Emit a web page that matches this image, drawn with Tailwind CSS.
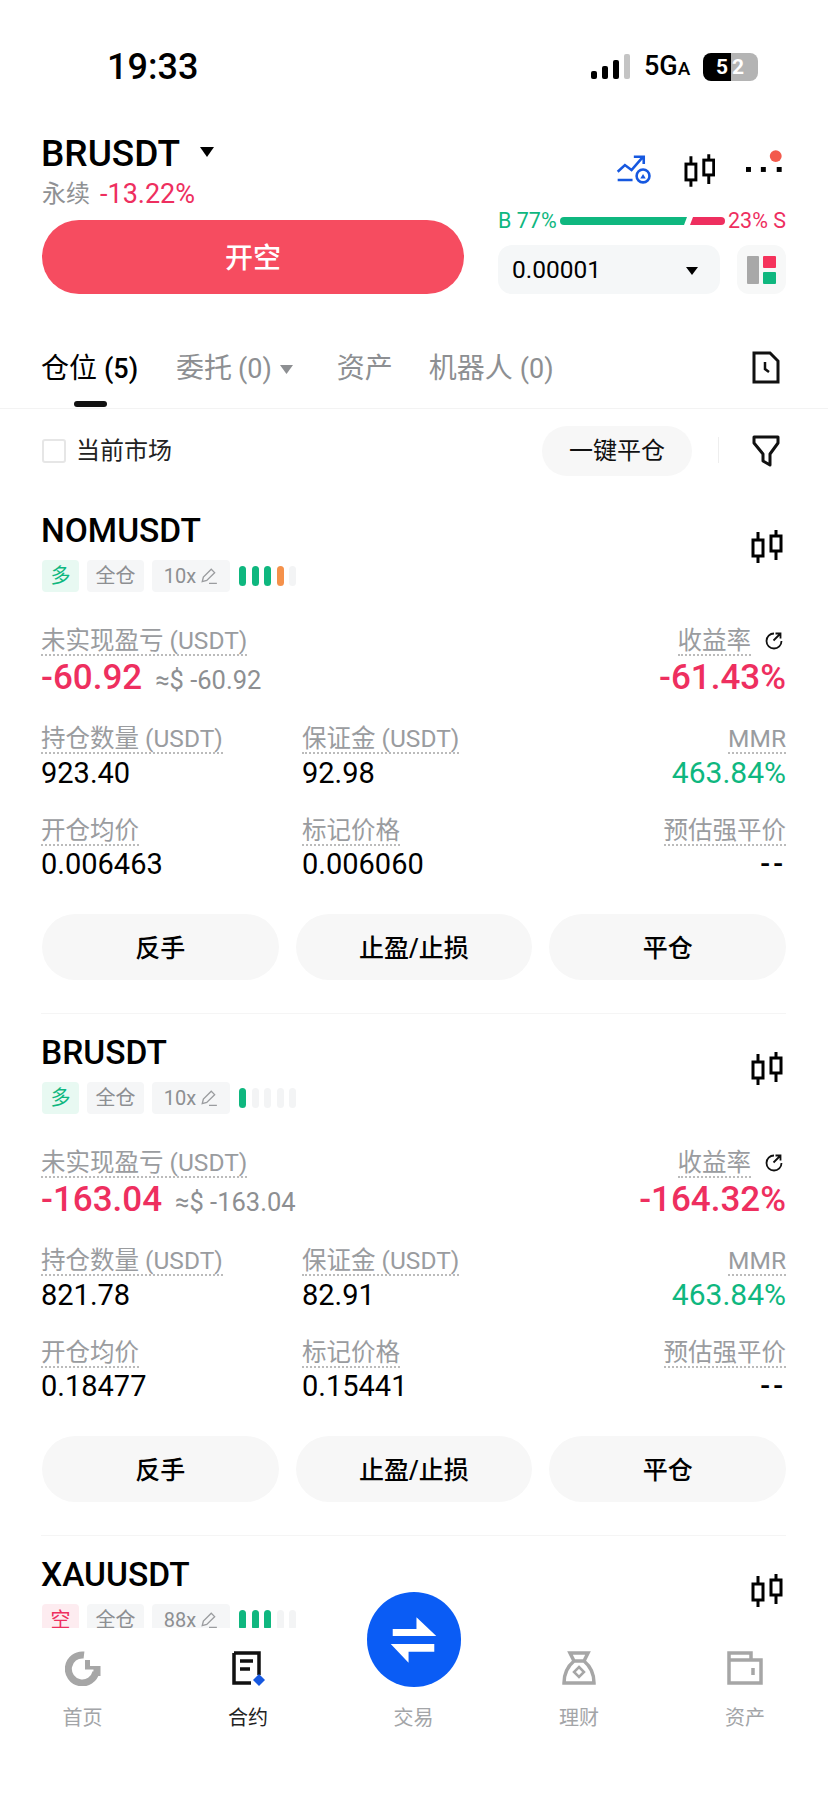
<!DOCTYPE html>
<html lang="zh-CN">
<head>
    <meta charset="UTF-8">
    <meta name="viewport" content="width=device-width, initial-scale=1.0">
    <title>BRUSDT</title>
    <script src="https://cdn.jsdelivr.net/npm/@tailwindcss/browser@4"></script>
</head>
<body class="bg-white text-black">
<svg class="hidden">
    <symbol id="candle" viewBox="0 0 32 34">
        <g fill="none" stroke="#000" stroke-width="3">
            <rect x="2" y="10" width="10" height="16"/><rect x="20" y="6" width="10" height="15"/>
            <path d="M7 2v8M7 26v7M25 0v6M25 21v9"/>
        </g>
    </symbol>
    <symbol id="pen" viewBox="0 0 16 16">
        <path d="M2 13 L3 9 L10 2 L13 5 L6 12 Z M8 14.5 H15" fill="none" stroke="#9a9c9f" stroke-width="1.2"/>
    </symbol>
    <symbol id="reload" viewBox="0 0 20 20">
        <path d="M10 2.5a7.500 7.500 0 1 0 7.500 7.500M9.500 9.500 16 3M11.500 2.500H16.500V7.500" fill="none" stroke="#111" stroke-width="1.800"/>
    </symbol>
</svg>

<div class="relative w-[828px] h-[1801px] overflow-hidden font-['Roboto','Noto_Sans_CJK_SC',sans-serif]">

    <!-- status bar -->
    <div class="h-[130px] pt-[47px] pl-[107px] pr-[70px] flex justify-between items-start">
        <span class="text-[36px] leading-[40px] font-medium">19:33</span>
        <div class="flex items-center h-[40px]">
            <svg width="40" height="26" viewBox="0 0 40 26">
                <rect x="0" y="17" width="6" height="8" rx="2" fill="#000"/>
                <rect x="11" y="12" width="6" height="13" rx="2" fill="#000"/>
                <rect x="22" y="6" width="6" height="19" rx="2" fill="#000"/>
                <rect x="33" y="0" width="6" height="25" rx="2" fill="#c4c4c4"/>
            </svg>
            <span class="ml-[13px] w-[47px] text-[27px] leading-[30px] font-medium whitespace-nowrap">5G<span class="text-[19px]">A</span></span>
            <div class="ml-[12px] flex h-[28px] w-[55px] rounded-[8px] overflow-hidden text-white text-[21px] leading-[28px] font-bold">
                <span class="w-[28px] bg-black text-right pr-[3px]">5</span>
                <span class="w-[27px] bg-[#b4b4b4] pl-[1px]">2</span>
            </div>
        </div>
    </div>

    <!-- header -->
    <div class="h-[164px] pl-[41px] pr-[42px] flex justify-between">
        <div class="w-[423px]">
            <div class="h-[46px] pt-[1px] flex items-center">
                <span class="text-[37px] font-medium">BRUSDT</span>
                <svg class="ml-[20px] mb-[4px]" width="14" height="10" viewBox="0 0 14 10"><path d="M0 0H14L7 10Z" fill="#000"/></svg>
            </div>
            <div class="h-[28px] mt-[4px] flex items-center text-[24px]">
                <span class="ml-[1px] text-[#8f9194]">永续</span>
                <span class="ml-[10px] text-[27px] text-[#ee2f5f]">-13.22%</span>
            </div>
            <div class="mt-[12px] ml-[1px] h-[74px] pt-[3px] rounded-full bg-[#f64c60] flex items-center justify-center text-white text-[28px] font-medium">开空</div>
        </div>
        <div class="w-[288px]">
            <div class="h-[83px] pt-[24px] flex items-start">
                <svg class="ml-[117px]" width="38" height="34" viewBox="25 24 38 34" fill="none" stroke="#1658e0" stroke-width="2.600">
                    <path d="M27.700 41.700 35 35 41.700 40 53 27M44 26.700H54V34M27.700 50H42.700"/>
                    <circle cx="53.300" cy="46" r="6.500"/>
                    <path d="M50.500 48.500H56L53.300 44Z" fill="#1658e0" stroke="none"/>
                </svg>
                <svg class="ml-[31px]" width="32" height="34"><use href="#candle"/></svg>
                <svg class="ml-[31px] -mt-[8px]" width="40" height="40" viewBox="0 0 40 40">
                    <rect x="0" y="21" width="5" height="5" fill="#000"/><rect x="15" y="21" width="5" height="5" fill="#000"/><rect x="31" y="21" width="5" height="5" fill="#000"/>
                    <circle cx="30" cy="10" r="6" fill="#f35a4c"/>
                </svg>
            </div>
            <div class="h-[16px] flex items-center justify-between text-[21.500px]">
                <span class="text-[#0fb77f]">B 77%</span>
                <svg width="165" height="8" viewBox="0 0 165 8">
                    <path d="M4 0H127L124 8H4A4 4 0 0 1 4 0Z" fill="#0fb77f"/>
                    <path d="M133 0H161A4 4 0 0 1 161 8H130Z" fill="#ee2f5f"/>
                </svg>
                <span class="text-[#ee2f5f]">23% S</span>
            </div>
            <div class="mt-[16px] flex justify-between">
                <div class="w-[222px] h-[49px] rounded-[14px] bg-[#f5f7f8] pl-[14px] pr-[22px] pt-[2px] flex items-center justify-between">
                    <span class="text-[24.500px]">0.00001</span>
                    <svg width="12" height="8" viewBox="0 0 12 8"><path d="M0 0H12L6 8Z" fill="#000"/></svg>
                </div>
                <div class="w-[49px] h-[49px] rounded-[12px] bg-[#f7f8f8] flex items-center justify-center">
                    <svg width="29" height="28" viewBox="0 0 29 28">
                        <rect x="0" y="0" width="12" height="28" rx="1" fill="#a8a8a8"/>
                        <rect x="16" y="0" width="13" height="12" rx="1" fill="#f5335c"/>
                        <rect x="16" y="16" width="13" height="12" rx="1" fill="#0fb77f"/>
                    </svg>
                </div>
            </div>
        </div>
    </div>

    <!-- tabs -->
    <div class="h-[115px] pt-[59px] pl-[41px] pr-[42px] border-b border-[#f3f3f3] flex items-start text-[28px] leading-[32px] text-[#8d8f92]">
        <div class="w-[99px] text-black">
            <div class="whitespace-nowrap">仓位 <span class="text-[27px] font-medium">(5)</span></div>
            <div class="mt-[16px] ml-[33px] w-[33px] h-[6px] rounded-full bg-[#111]"></div>
        </div>
        <div class="ml-[36px] flex items-center">委托 <span class="ml-[6px] text-[27px]">(0)</span>
            <svg class="ml-[8px]" width="13" height="9" viewBox="0 0 13 9"><path d="M0 0H13L6.500 9Z" fill="#8d8f92"/></svg>
        </div>
        <div class="ml-[44px]">资产</div>
        <div class="ml-[36px]">机器人 <span class="text-[27px]">(0)</span></div>
        <svg class="ml-auto mr-[6px] -mt-[2px]" width="28" height="33" viewBox="0 0 28 33" fill="none" stroke="#111" stroke-width="3">
            <path d="M2 2H18L26 10V31H2Z"/><path d="M13 11V18L17 21" stroke-width="2.500"/>
        </svg>
    </div>

    <!-- filter row -->
    <div class="h-[85px] px-[42px] flex items-start pt-[17px]">
        <div class="flex items-center h-[50px]">
            <div class="w-[24px] h-[24px] rounded-[3px] border-2 border-[#e6e6e6]"></div>
            <span class="ml-[10px] text-[24px] text-[#222]">当前市场</span>
        </div>
        <div class="ml-auto w-[150px] h-[50px] rounded-full bg-[#f7f7f7] flex items-center justify-center text-[24px] text-[#111]">一键平仓</div>
        <div class="ml-[26px] mt-[11px] w-[1px] h-[26px] bg-[#eeeeee]"></div>
        <svg class="ml-[33px] mr-[6px] mt-[9px]" width="28" height="32" viewBox="0 0 28 32" fill="none" stroke="#111" stroke-width="3" stroke-linejoin="round">
            <path d="M2 2H26V8L18 19V30L11 26V19L2 8Z"/>
        </svg>
    </div>

    <!-- NOMUSDT -->
    <div class="ml-[41px] mr-[42px] pt-[14px] pb-[33px] mb-[2px] border-b border-[#f5f5f5]">
        <div class="h-[84px] flex justify-between items-start">
            <div>
                <div class="h-[44px] pt-[1px] flex items-center text-[33.500px] leading-[44px] font-medium">NOMUSDT</div>
                <div class="ml-[1px] mt-[8px] flex items-center gap-[8px] text-[20px] leading-[32px] text-[#8d8f92]">
                    <span class="w-[37px] h-[32px] rounded-[4px] bg-[#e8f9f2] text-center text-[#0fb77f]">多</span>
                    <span class="w-[57px] h-[32px] rounded-[4px] bg-[#f5f6f7] text-center">全仓</span>
                    <span class="w-[78px] h-[32px] rounded-[4px] bg-[#f5f6f7] flex items-center justify-center gap-[4px]">10x <svg width="18" height="18"><use href="#pen"/></svg></span>
                    <span class="ml-[1px] flex gap-[5.500px]">
                        <i class="w-[7px] h-[20px] rounded-full bg-[#0fb77f]"></i><i class="w-[7px] h-[20px] rounded-full bg-[#0fb77f]"></i><i class="w-[7px] h-[20px] rounded-full bg-[#0fb77f]"></i><i class="w-[7px] h-[20px] rounded-full bg-[#f5914a]"></i><i class="w-[7px] h-[20px] rounded-full bg-[#f3f4f5]"></i>
                    </span>
                </div>
            </div>
            <svg class="mt-[22px] mr-[3px]" width="32" height="34"><use href="#candle"/></svg>
        </div>
        <div class="mt-[35px] flex justify-between">
            <span class="h-[29px] text-[24.500px] leading-[28px] text-[#9a9c9f] border-b-2 border-dotted border-[#bbbbbb]">未实现盈亏 (USDT)</span>
            <span class="h-[29px] flex items-start">
                <span class="h-[29px] text-[24.500px] leading-[28px] text-[#9a9c9f] border-b-2 border-dotted border-[#bbbbbb]">收益率</span>
                <svg class="ml-[13px] mt-[4px] mr-[2px]" width="20" height="20"><use href="#reload"/></svg>
            </span>
        </div>
        <div class="h-[44px] flex justify-between items-center">
            <span class="flex items-baseline"><span class="text-[35px] font-medium text-[#ee2f5f]">-60.92</span><span class="ml-[13px] text-[25.500px] text-[#8d8f92]">≈$ -60.92</span></span>
            <span class="text-[35px] font-medium text-[#ee2f5f]">-61.43%</span>
        </div>
        <div class="mt-[24px] grid grid-cols-[261px_1fr_auto]">
            <div><span class="inline-block h-[30px] text-[24.500px] leading-[29px] text-[#9a9c9f] border-b-2 border-dotted border-[#bbbbbb]">持仓数量 (USDT)</span><div class="h-[38px] leading-[38px] text-[29px]">923.40</div></div>
            <div><span class="inline-block h-[30px] text-[24.500px] leading-[29px] text-[#9a9c9f] border-b-2 border-dotted border-[#bbbbbb]">保证金 (USDT)</span><div class="h-[38px] leading-[38px] text-[29px]">92.98</div></div>
            <div class="text-right"><span class="inline-block h-[30px] text-[24.500px] leading-[29px] text-[#9a9c9f] border-b-2 border-dotted border-[#bbbbbb]">MMR</span><div class="h-[38px] leading-[38px] text-[30px] text-[#0fb77f]">463.84%</div></div>
        </div>
        <div class="mt-[24px] grid grid-cols-[261px_1fr_auto]">
            <div><span class="inline-block h-[30px] text-[24.500px] leading-[29px] text-[#9a9c9f] border-b-2 border-dotted border-[#bbbbbb]">开仓均价</span><div class="h-[36px] leading-[36px] text-[29px]">0.006463</div></div>
            <div><span class="inline-block h-[30px] text-[24.500px] leading-[29px] text-[#9a9c9f] border-b-2 border-dotted border-[#bbbbbb]">标记价格</span><div class="h-[36px] leading-[36px] text-[29px]">0.006060</div></div>
            <div class="text-right"><span class="inline-block h-[30px] text-[24.500px] leading-[29px] text-[#9a9c9f] border-b-2 border-dotted border-[#bbbbbb]">预估强平价</span><div class="h-[36px] leading-[36px] text-[29px] font-medium tracking-[3px]">--</div></div>
        </div>
        <div class="mt-[32px] ml-[1px] grid grid-cols-3 gap-[17px] text-[25px] font-medium">
            <div class="h-[66px] pt-[3px] rounded-full bg-[#f7f7f7] flex items-center justify-center">反手</div>
            <div class="h-[66px] pt-[3px] rounded-full bg-[#f7f7f7] flex items-center justify-center">止盈/止损</div>
            <div class="h-[66px] pt-[3px] rounded-full bg-[#f7f7f7] flex items-center justify-center">平仓</div>
        </div>
    </div>

    <!-- BRUSDT -->
    <div class="ml-[41px] mr-[42px] pt-[14px] pb-[33px] mb-[2px] border-b border-[#f5f5f5]">
        <div class="h-[84px] flex justify-between items-start">
            <div>
                <div class="h-[44px] pt-[1px] flex items-center text-[33.500px] leading-[44px] font-medium">BRUSDT</div>
                <div class="ml-[1px] mt-[8px] flex items-center gap-[8px] text-[20px] leading-[32px] text-[#8d8f92]">
                    <span class="w-[37px] h-[32px] rounded-[4px] bg-[#e8f9f2] text-center text-[#0fb77f]">多</span>
                    <span class="w-[57px] h-[32px] rounded-[4px] bg-[#f5f6f7] text-center">全仓</span>
                    <span class="w-[78px] h-[32px] rounded-[4px] bg-[#f5f6f7] flex items-center justify-center gap-[4px]">10x <svg width="18" height="18"><use href="#pen"/></svg></span>
                    <span class="ml-[1px] flex gap-[5.500px]">
                        <i class="w-[7px] h-[20px] rounded-full bg-[#0fb77f]"></i><i class="w-[7px] h-[20px] rounded-full bg-[#f3f4f5]"></i><i class="w-[7px] h-[20px] rounded-full bg-[#f3f4f5]"></i><i class="w-[7px] h-[20px] rounded-full bg-[#f3f4f5]"></i><i class="w-[7px] h-[20px] rounded-full bg-[#f3f4f5]"></i>
                    </span>
                </div>
            </div>
            <svg class="mt-[22px] mr-[3px]" width="32" height="34"><use href="#candle"/></svg>
        </div>
        <div class="mt-[35px] flex justify-between">
            <span class="h-[29px] text-[24.500px] leading-[28px] text-[#9a9c9f] border-b-2 border-dotted border-[#bbbbbb]">未实现盈亏 (USDT)</span>
            <span class="h-[29px] flex items-start">
                <span class="h-[29px] text-[24.500px] leading-[28px] text-[#9a9c9f] border-b-2 border-dotted border-[#bbbbbb]">收益率</span>
                <svg class="ml-[13px] mt-[4px] mr-[2px]" width="20" height="20"><use href="#reload"/></svg>
            </span>
        </div>
        <div class="h-[44px] flex justify-between items-center">
            <span class="flex items-baseline"><span class="text-[35px] font-medium text-[#ee2f5f]">-163.04</span><span class="ml-[13px] text-[25.500px] text-[#8d8f92]">≈$ -163.04</span></span>
            <span class="text-[35px] font-medium text-[#ee2f5f]">-164.32%</span>
        </div>
        <div class="mt-[24px] grid grid-cols-[261px_1fr_auto]">
            <div><span class="inline-block h-[30px] text-[24.500px] leading-[29px] text-[#9a9c9f] border-b-2 border-dotted border-[#bbbbbb]">持仓数量 (USDT)</span><div class="h-[38px] leading-[38px] text-[29px]">821.78</div></div>
            <div><span class="inline-block h-[30px] text-[24.500px] leading-[29px] text-[#9a9c9f] border-b-2 border-dotted border-[#bbbbbb]">保证金 (USDT)</span><div class="h-[38px] leading-[38px] text-[29px]">82.91</div></div>
            <div class="text-right"><span class="inline-block h-[30px] text-[24.500px] leading-[29px] text-[#9a9c9f] border-b-2 border-dotted border-[#bbbbbb]">MMR</span><div class="h-[38px] leading-[38px] text-[30px] text-[#0fb77f]">463.84%</div></div>
        </div>
        <div class="mt-[24px] grid grid-cols-[261px_1fr_auto]">
            <div><span class="inline-block h-[30px] text-[24.500px] leading-[29px] text-[#9a9c9f] border-b-2 border-dotted border-[#bbbbbb]">开仓均价</span><div class="h-[36px] leading-[36px] text-[29px]">0.18477</div></div>
            <div><span class="inline-block h-[30px] text-[24.500px] leading-[29px] text-[#9a9c9f] border-b-2 border-dotted border-[#bbbbbb]">标记价格</span><div class="h-[36px] leading-[36px] text-[29px]">0.15441</div></div>
            <div class="text-right"><span class="inline-block h-[30px] text-[24.500px] leading-[29px] text-[#9a9c9f] border-b-2 border-dotted border-[#bbbbbb]">预估强平价</span><div class="h-[36px] leading-[36px] text-[29px] font-medium tracking-[3px]">--</div></div>
        </div>
        <div class="mt-[32px] ml-[1px] grid grid-cols-3 gap-[17px] text-[25px] font-medium">
            <div class="h-[66px] pt-[3px] rounded-full bg-[#f7f7f7] flex items-center justify-center">反手</div>
            <div class="h-[66px] pt-[3px] rounded-full bg-[#f7f7f7] flex items-center justify-center">止盈/止损</div>
            <div class="h-[66px] pt-[3px] rounded-full bg-[#f7f7f7] flex items-center justify-center">平仓</div>
        </div>
    </div>

    <!-- XAUUSDT, cut off by the nav -->
    <div class="ml-[41px] mr-[42px] pt-[14px]">
        <div class="h-[84px] flex justify-between items-start">
            <div>
                <div class="h-[44px] pt-[1px] flex items-center text-[33.500px] leading-[44px] font-medium">XAUUSDT</div>
                <div class="ml-[1px] mt-[8px] flex items-center gap-[8px] text-[20px] leading-[32px] text-[#8d8f92]">
                    <span class="w-[37px] h-[32px] rounded-[4px] bg-[#fdecf0] text-center text-[#ee2f5f]">空</span>
                    <span class="w-[57px] h-[32px] rounded-[4px] bg-[#f5f6f7] text-center">全仓</span>
                    <span class="w-[78px] h-[32px] rounded-[4px] bg-[#f5f6f7] flex items-center justify-center gap-[4px]">88x <svg width="18" height="18"><use href="#pen"/></svg></span>
                    <span class="ml-[1px] flex gap-[5.500px]">
                        <i class="w-[7px] h-[20px] rounded-full bg-[#0fb77f]"></i><i class="w-[7px] h-[20px] rounded-full bg-[#0fb77f]"></i><i class="w-[7px] h-[20px] rounded-full bg-[#0fb77f]"></i><i class="w-[7px] h-[20px] rounded-full bg-[#f3f4f5]"></i><i class="w-[7px] h-[20px] rounded-full bg-[#f3f4f5]"></i>
                    </span>
                </div>
            </div>
            <svg class="mt-[22px] mr-[3px]" width="32" height="34"><use href="#candle"/></svg>
        </div>
    </div>

    <!-- bottom nav -->
    <div class="absolute left-0 right-0 top-[1628px] bottom-0 bg-white">
        <div class="mt-[23px] grid grid-cols-[165px_166px_165px_166px_166px] text-[20px] leading-[24px] text-[#a3a5a8]">
            <div class="flex flex-col items-center">
                <svg width="36" height="35" viewBox="0 0 36 35" fill="none">
                    <path d="M19 4A14 14 0 1 0 31 21" stroke="#a6a6a6" stroke-width="7"/>
                    <path d="M20 0.500V9H25V15H35.500V25L27 25C28 23 28.500 21 28.500 18.500H20V9Z" fill="#a6a6a6"/>
                </svg>
                <span class="mt-[20px]">首页</span>
            </div>
            <div class="flex flex-col items-center text-[#222]">
                <svg width="36" height="35" viewBox="0 0 36 35" fill="none">
                    <path d="M4 2H29V24M4 2V32H21" stroke="#111" stroke-width="3.500"/>
                    <path d="M10 10H23M10 18H20" stroke="#111" stroke-width="3.500"/>
                    <path d="M29 23L35 29L29 35L23 29Z" fill="#1658e0"/>
                </svg>
                <span class="mt-[20px]">合约</span>
            </div>
            <div class="flex flex-col items-center">
                <div class="h-[35px]"></div>
                <span class="mt-[20px]">交易</span>
            </div>
            <div class="flex flex-col items-center">
                <svg width="36" height="35" viewBox="0 0 36 35" fill="none" stroke="#a6a6a6" stroke-width="3.500">
                    <path d="M9 2H27L23 10H13ZM13 10C7 15 3 22 3 32H33C33 22 29 15 23 10"/>
                    <path d="M18 16L23 21L18 26L13 21Z" stroke-width="2.500"/>
                </svg>
                <span class="mt-[20px]">理财</span>
            </div>
            <div class="flex flex-col items-center">
                <svg width="36" height="35" viewBox="0 0 36 35" fill="none" stroke="#a6a6a6" stroke-width="3.500">
                    <path d="M2 2H24V9H34V32H2ZM2 9H24M26 17V24"/>
                </svg>
                <span class="mt-[20px]">资产</span>
            </div>
        </div>
    </div>

    <!-- trade button -->
    <div class="absolute left-[367px] top-[1592px] w-[94px] h-[95px] rounded-full bg-[#0a5cf5]">
        <svg width="94" height="95" viewBox="0 0 95 95" fill="#fff">
            <path d="M26 37H50V25L70 44H26Z"/>
            <path d="M68 52H24L42 71V60H68Z"/>
        </svg>
    </div>
</div>
</body>
</html>
